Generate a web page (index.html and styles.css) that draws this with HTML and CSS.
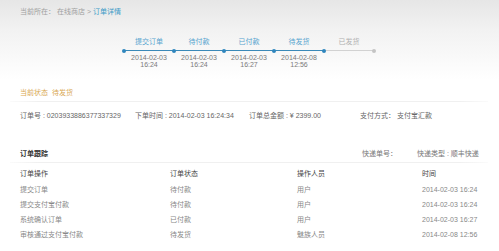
FILE: index.html
```html
<!DOCTYPE html>
<html lang="zh-CN">
<head>
<meta charset="utf-8">
<title>订单详情</title>
<link rel="stylesheet" href="styles.css">
</head>
<body>
<div class="page">
  <div class="crumb">当前所在：&nbsp;在线商店 &gt; <span class="cur">订单详情</span></div>

  <div class="timeline">
    <div class="step done">
      <div class="lbl">提交订单</div>
      <div class="bar"></div>
      <div class="date">2014-02-03<br>16:24</div>
    </div>
    <div class="step done">
      <div class="lbl">待付款</div>
      <div class="bar"></div>
      <div class="date">2014-02-03<br>16:24</div>
    </div>
    <div class="step done">
      <div class="lbl">已付款</div>
      <div class="bar"></div>
      <div class="date">2014-02-03<br>16:27</div>
    </div>
    <div class="step done">
      <div class="lbl">待发货</div>
      <div class="bar"></div>
      <div class="date">2014-02-08<br>12:56</div>
    </div>
    <div class="step todo last">
      <div class="lbl">已发货</div>
      <div class="bar"></div>
      <div class="date">&nbsp;<br>&nbsp;</div>
    </div>
  </div>

  <div class="status">当前状态&nbsp;&nbsp;待发货</div>
  <div class="rule"></div>

  <div class="info">
    <div class="c1">订单号 : 0203933886377337329</div>
    <div class="c2">下单时间 : 2014-02-03 16:24:34</div>
    <div class="c3">订单总金额 : ¥ 2399.00</div>
    <div class="c4">支付方式：&nbsp;支付宝汇款</div>
  </div>

  <div class="sec-head">
    <div class="sec-title">订单跟踪</div>
    <div class="exp-no">快递单号：</div>
    <div class="exp-type">快递类型 : 顺丰快递</div>
  </div>
  <div class="rule"></div>

  <div class="track">
    <div class="row head"><span>订单操作</span><span>订单状态</span><span>操作人员</span><span>时间</span></div>
    <div class="row"><span>提交订单</span><span>待付款</span><span>用户</span><span>2014-02-03 16:24</span></div>
    <div class="row"><span>提交支付宝付款</span><span>待付款</span><span>用户</span><span>2014-02-03 16:24</span></div>
    <div class="row"><span>系统确认订单</span><span>已付款</span><span>用户</span><span>2014-02-03 16:27</span></div>
    <div class="row"><span>审核通过支付宝付款</span><span>待发货</span><span>魅族人员</span><span>2014-02-08 12:56</span></div>
  </div>
</div>
</body>
</html>
```

FILE: styles.css
```css
html, body {
  margin: 0;
  padding: 0;
}
body {
  width: 499px;
  height: 251px;
  overflow: hidden;
  background: linear-gradient(to bottom, #e6e6e6 0px, #f2f2f2 30px, #ffffff 80px);
  font-family: "Liberation Sans", "Noto Sans CJK SC", sans-serif;
  font-size: 7px;
  color: #666;
}
.page {
  display: flex;
  flex-direction: column;
}
.crumb {
  padding: 7px 0 0 20px;
  line-height: 10px;
  color: #a0a0a0;
}
.crumb .cur {
  color: #3b9ac7;
}

.timeline {
  display: flex;
  margin: 20px 0 0 124px;
}
.step {
  width: 50px;
  display: flex;
  flex-direction: column;
  align-items: center;
}
.step .lbl {
  line-height: 9px;
  color: #56a4cf;
}
.step.todo .lbl {
  color: #b0b0b0;
}
.step .bar {
  align-self: stretch;
  height: 1px;
  margin-top: 4px;
  background: #3a89b8;
  position: relative;
}
.step.todo .bar {
  background: #d2d2d2;
}
.step .bar::before {
  content: "";
  position: absolute;
  left: -2px;
  top: -1.5px;
  width: 4px;
  height: 4px;
  border-radius: 50%;
  background: #2f86bd;
}
.step.last .bar::after {
  content: "";
  position: absolute;
  right: -2px;
  top: -1.5px;
  width: 4px;
  height: 4px;
  border-radius: 50%;
  background: #c4c4c4;
}
.step .date {
  margin-top: 3px;
  line-height: 7px;
  text-align: center;
  color: #7a7a7a;
}

.status {
  margin-top: 20px;
  padding-left: 20px;
  line-height: 10px;
  color: #d9a853;
}
.rule {
  margin: 3px 11px 0 10px;
  height: 1px;
  background: linear-gradient(to right, rgba(240,240,240,0.3), #f0f0f0 6%, #f0f0f0 94%, rgba(240,240,240,0.3));
}

.info {
  display: flex;
  margin-top: 9px;
  padding-left: 20px;
  line-height: 10px;
  color: #666;
}
.info .c1 { width: 115px; }
.info .c2 { width: 114px; }
.info .c3 { width: 111px; }

.sec-head {
  display: flex;
  margin-top: 28px;
  padding-left: 20px;
  line-height: 10px;
}
.sec-title {
  width: 342px;
  font-weight: bold;
  color: #333;
}
.exp-no {
  width: 55px;
  color: #777;
}
.exp-type {
  color: #777;
}

.track {
  display: flex;
  flex-direction: column;
  margin-top: 3px;
  padding-left: 20px;
}
.row {
  display: flex;
  height: 15px;
  line-height: 15px;
  color: #888;
}
.row.head {
  height: 16px;
  color: #444;
}
.row span:nth-child(1) { width: 150px; }
.row span:nth-child(2) { width: 127px; }
.row span:nth-child(3) { width: 125px; }
```
